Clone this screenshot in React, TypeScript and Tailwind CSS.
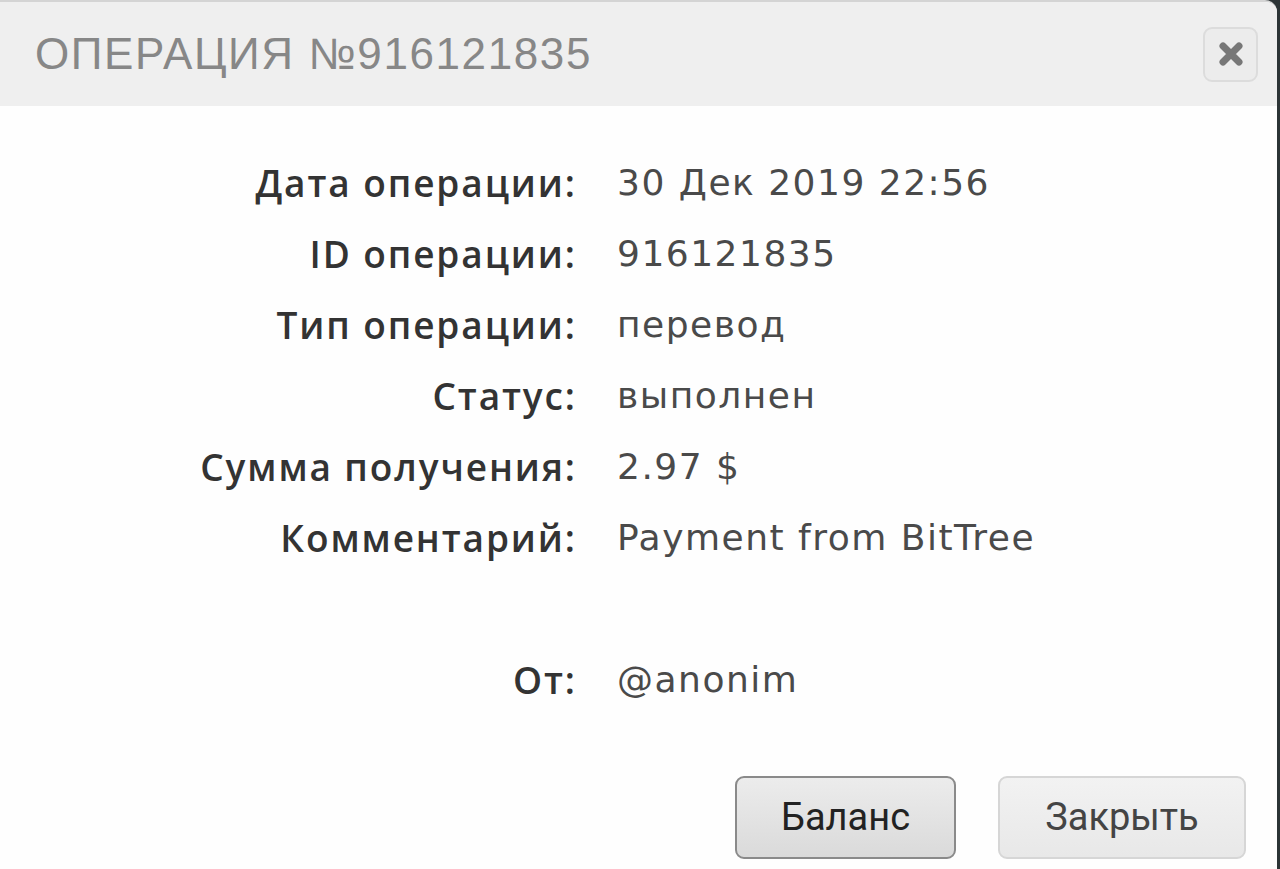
import React from "react";

const rows: [string, string][] = [
  ["Дата операции:", "30 Дек 2019 22:56"],
  ["ID операции:", "916121835"],
  ["Тип операции:", "перевод"],
  ["Статус:", "выполнен"],
  ["Сумма получения:", "2.97 $"],
  ["Комментарий:", "Payment from BitTree"],
  ["", ""],
  ["От:", "@anonim"],
];

export default function App() {
  return (
    <div className="w-[1280px] h-[869px] bg-[#2c3436] flex overflow-hidden">
      <div className="w-[1277px] h-full bg-[#fefefe] rounded-tr-[12px] border-t-2 border-[#d4d4d4] flex flex-col overflow-hidden">
        <div className="h-[104px] bg-[#efefef] flex items-center justify-between pl-[35px] pr-[19px] shrink-0">
          <div
            className="text-[44px] text-[#878787] tracking-[1.6px] leading-none"
            style={{ fontFamily: '"Liberation Sans", Arial, sans-serif' }}
          >
            ОПЕРАЦИЯ №916121835
          </div>
          <button className="w-[55px] h-[55px] rounded-[9px] border-2 border-[#dcdcdc] bg-[#ececec] flex items-center justify-center">
            <svg width="26" height="26" viewBox="0 0 26 26">
              <path d="M5 5 L21 21 M21 5 L5 21" stroke="#777" strokeWidth="7" strokeLinecap="round" />
            </svg>
          </button>
        </div>
        <div className="grid grid-cols-[575px_1fr] gap-x-[42px] pt-[41px]">
          {rows.map(([l, v], i) => (
            <React.Fragment key={i}>
              <div
                className="h-[71px] flex items-center justify-end text-[37px] font-semibold text-[#333333] tracking-[1.9px] mr-[-1.9px]"
                style={{ fontFamily: '"Open Sans", Arial, sans-serif' }}
              >
                {l}
              </div>
              <div
                className="h-[71px] flex items-center text-[36px] text-[#4a4a4a] tracking-[1.5px]"
                style={{ fontFamily: '"DejaVu Sans", Arial, sans-serif' }}
              >
                {v}
              </div>
            </React.Fragment>
          ))}
        </div>
        <div className="flex justify-end gap-[42px] pr-[31px] mt-auto mb-[10px]">
          <button
            className="w-[221px] h-[83px] rounded-[9px] border-2 border-[#8a8a8a] bg-gradient-to-b from-[#ececec] to-[#dadada] text-[38px] text-[#222]"
            style={{ fontFamily: 'Roboto, Arial, sans-serif' }}
          >
            Баланс
          </button>
          <button
            className="w-[248px] h-[83px] rounded-[9px] border-2 border-[#d6d6d6] bg-gradient-to-b from-[#f2f2f2] to-[#e8e8e8] text-[38px] text-[#444]"
            style={{ fontFamily: 'Roboto, Arial, sans-serif' }}
          >
            Закрыть
          </button>
        </div>
      </div>
    </div>
  );
}
